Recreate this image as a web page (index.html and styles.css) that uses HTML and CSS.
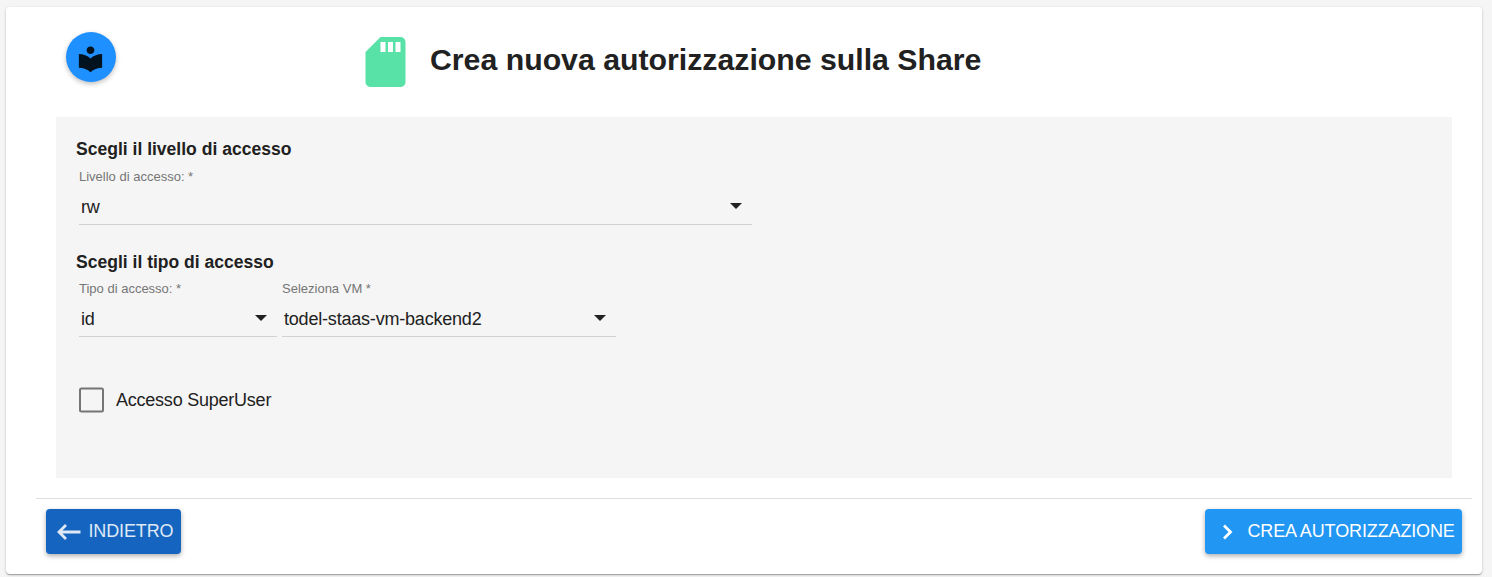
FILE: index.html
```html
<!DOCTYPE html>
<html lang="it">
<head>
<meta charset="utf-8">
<title>Crea nuova autorizzazione sulla Share</title>
<link rel="stylesheet" href="styles.css">
</head>
<body>
<main class="card">
  <header class="header">
    <button class="guide" aria-label="Guida">
      <svg width="31" height="30" viewBox="0 0 24 24" preserveAspectRatio="none"><path d="M12 11.55C9.64 9.35 6.48 8 3 8v11c3.48 0 6.64 1.35 9 3.55 2.36-2.19 5.52-3.55 9-3.55V8c-3.48 0-6.64 1.35-9 3.55zM12 8c1.66 0 3-1.34 3-3s-1.34-3-3-3-3 1.34-3 3 1.34 3 3 3z"/></svg>
    </button>
    <svg class="share-icon" viewBox="0 0 24 24"><path fill-rule="evenodd" d="M18 2h-8L4 8v12c0 1.100.9 2 2 2h12c1.100 0 2-.9 2-2V4c0-1.100-.9-2-2-2zM12 8h-2V4h2v4zm3 0h-2V4h2v4zm3 0h-2V4h2v4z"/></svg>
    <h1 class="title">Crea nuova autorizzazione sulla Share</h1>
  </header>
  <section class="panel">
    <h2 class="heading heading-level">Scegli il livello di accesso</h2>
    <div class="fields">
      <div class="field field-level">
        <label class="label">Livello di accesso: *</label>
        <div class="select"><span class="value">rw</span><i class="caret"></i></div>
      </div>
    </div>
    <h2 class="heading heading-type">Scegli il tipo di accesso</h2>
    <div class="fields">
      <div class="field field-type">
        <label class="label">Tipo di accesso: *</label>
        <div class="select"><span class="value">id</span><i class="caret"></i></div>
      </div>
      <div class="field field-vm">
        <label class="label">Seleziona VM *</label>
        <div class="select"><span class="value">todel-staas-vm-backend2</span><i class="caret"></i></div>
      </div>
    </div>
    <label class="check"><svg class="box" width="25" height="26" viewBox="0 0 25 26"><rect x="1" y="1.500" width="23" height="23" rx="1.500"/></svg><span class="check-text">Accesso SuperUser</span></label>
  </section>
  <footer class="footer">
    <button class="btn back">
      <svg width="24" height="18" viewBox="0 0 24 18"><path d="M9 2L2 9l7 7M2 9h21.500"/></svg>
      <span class="back-text">INDIETRO</span>
    </button>
    <button class="btn create">
      <svg width="12" height="18" viewBox="0 0 12 18"><path d="M2 2.500L8.500 9 2 15.500"/></svg>
      <span class="create-text">CREA AUTORIZZAZIONE</span>
    </button>
  </footer>
</main>
</body>
</html>
```
FILE: styles.css
```css
* { box-sizing: border-box; }
body {
  margin: 0;
  padding: 7px 10px 3px 6px;
  height: 577px;
  overflow: hidden;
  background: #f5f5f5;
  color: #212121;
  font-family: "Liberation Sans", Arial, sans-serif;
}
.card {
  height: 567px;
  padding: 0 10px 0 30px;
  background: #fff;
  border-radius: 4px;
  box-shadow: 0 1px 3px rgba(0,0,0,.2), 0 1px 1px rgba(0,0,0,.14), 0 2px 1px -1px rgba(0,0,0,.12);
}
.header { display: flex; height: 110px; padding: 25px 0 0 30px; }
.guide {
  display: flex;
  align-items: center;
  justify-content: center;
  width: 50px;
  height: 50px;
  padding: 4px 1px 0 0;
  border: 0;
  border-radius: 50%;
  background: #1e90ff;
  box-shadow: 0 2px 5px rgba(0,0,0,.26);
  fill: #03121f;
}
.share-icon { width: 61px; height: 60px; margin-left: 239px; fill: #58e2a8; }
.title { margin: 10px 0 0 14px; font-size: 30.250px; line-height: 36px; white-space: nowrap; }
.panel { height: 361px; margin: 0 20px; padding: 20px 20px 0; background: #f5f5f5; }
.heading { margin: 0; font-size: 17.550px; line-height: 24px; white-space: nowrap; }
.heading-type { margin-top: 24px; padding-top: 1px; height: 24px; }
.fields { display: flex; gap: 5px; padding-left: 3px; }
.field { height: 64px; }
.field-level { width: 673px; }
.field-type { width: 198px; }
.field-vm { width: 334px; }
.label { display: block; height: 29px; padding-top: 8px; font-size: 13px; line-height: 16px; color: #757575; white-space: nowrap; }
.select {
  display: flex;
  align-items: center;
  justify-content: space-between;
  height: 35px;
  padding: 0 10px 0 2px;
  border-bottom: 1px solid #d2d2d2;
}
.value { font-size: 18px; letter-spacing: -.2px; line-height: 34px; white-space: nowrap; }
.caret { margin-bottom: 2px; border: 6px solid transparent; border-top-color: #212121; border-bottom: 0; }
.check { display: flex; align-items: center; gap: 12px; height: 26px; margin: 50px 0 0 3px; }
.box { fill: none; stroke: #757575; stroke-width: 2; margin-top: -1px; }
.check-text { font-size: 18px; letter-spacing: -.23px; }
.footer {
  display: flex;
  justify-content: space-between;
  margin-top: 20px;
  padding: 10px 10px 0;
  border-top: 1px solid #dedede;
}
.btn {
  display: flex;
  align-items: center;
  height: 45px;
  padding: 0;
  border: 0;
  border-radius: 4px;
  font: 18px/44px "Liberation Sans", Arial, sans-serif;
  letter-spacing: -.13px;
  white-space: nowrap;
  box-shadow: 0 2px 5px rgba(0,0,0,.32);
}
.btn svg { fill: none; stroke: currentColor; stroke-width: 2.800; }
.btn span { padding-bottom: 2px; line-height: 42px; }
.back { width: 135px; padding-left: 10.500px; gap: 8px; background: #1565c0; color: #dfe9f5; }
.create { width: 257px; padding-left: 17px; gap: 13.500px; background: #2196f3; color: #fff; }
```
